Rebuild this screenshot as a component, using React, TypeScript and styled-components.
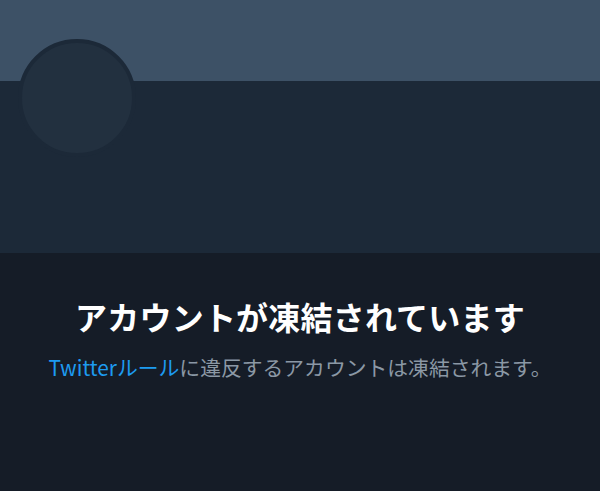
import React from "react";
import styled, { createGlobalStyle } from "styled-components";

const GlobalStyle = createGlobalStyle`
	html, body {
		margin: 0;
		padding: 0;
		background: #151c27;
	}
	body {
		font-family: "Noto Sans CJK JP", "Noto Sans", sans-serif;
	}
`;

const Page = styled.div`
	width: 600px;
	height: 491px;
	display: flex;
	flex-direction: column;
	overflow: hidden;
`;

const Banner = styled.div`
	height: 81px;
	background: #3d5166;
	flex-shrink: 0;
`;

const Profile = styled.div`
	position: relative;
	height: 172px;
	background: #1c2938;
	flex-shrink: 0;
`;

const Avatar = styled.div`
	position: absolute;
	left: 18px;
	top: -42px;
	width: 110px;
	height: 110px;
	border-radius: 50%;
	border: 4px solid #1c2938;
	background: #22303f;
`;

const Notice = styled.div`
	flex: 1;
	background: #151c27;
	display: flex;
	flex-direction: column;
	align-items: center;
	padding-top: 40px;
`;

const Title = styled.h1`
	margin: 0;
	color: #ffffff;
	font-size: 32px;
	font-weight: 700;
	line-height: 46px;
	letter-spacing: 0.2px;
`;

const Message = styled.p`
	margin: 14px 0 0;
	color: #8b98a5;
	font-size: 20.8px;
	line-height: 28px;
`;

const RuleLink = styled.span`
	color: #1d9bf0;
`;

const App = () => {
	return (
		<Page>
			<GlobalStyle />
			<Banner />
			<Profile>
				<Avatar />
			</Profile>
			<Notice>
				<Title>アカウントが凍結されています</Title>
				<Message>
					<RuleLink>Twitterルール</RuleLink>に違反するアカウントは凍結されます。
				</Message>
			</Notice>
		</Page>
	);
};

export default App;
